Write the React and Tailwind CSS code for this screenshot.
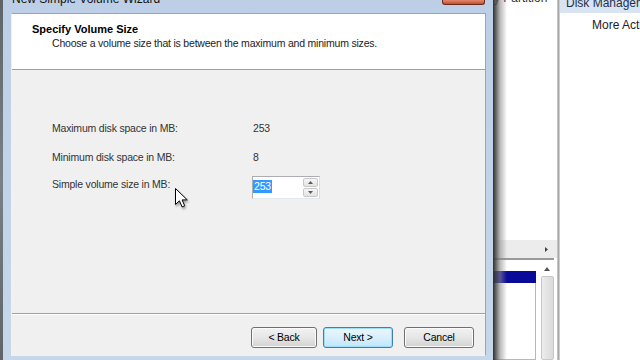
import React from 'react';

const Cursor = () => (
  <svg width="14" height="21" viewBox="0 0 14 21" className="absolute left-[163px] top-[118px] drop-shadow-[1px_2px_1px_rgba(0,0,0,0.35)]">
    <path d="M0.5 0.5 L0.5 16.5 L4.4 12.8 L7.1 18.9 L9.7 17.8 L7.1 11.9 L12.3 11.9 Z" fill="#fff" stroke="#000" strokeWidth="1" strokeLinejoin="round" />
  </svg>
);

const SpinBox = () => (
  <div className="w-[68px] h-[23px] flex border border-[#abadb3] border-b-[#e3e9ef] border-r-[#dbdfe6] bg-white">
    <div className="flex-1 pt-[3px] pl-0">
      <span className="inline-block h-[13px] leading-[13px] px-[1px] bg-[#3399ff] text-white text-[10.5px] tracking-[-0.2px]">253</span>
    </div>
    <div className="w-[15px] my-[1px] mr-[1px] flex flex-col gap-[1px]">
      <div className="flex-1 flex items-center justify-center border border-[#c9c9c9] rounded-[2px] bg-gradient-to-b from-[#f6f6f6] to-[#e4e4e4]">
        <svg width="5" height="3" viewBox="0 0 5 3"><path d="M0 3 L2.5 0 L5 3 Z" fill="#5a5a5a" /></svg>
      </div>
      <div className="flex-1 flex items-center justify-center border border-[#c9c9c9] rounded-[2px] bg-gradient-to-b from-[#f6f6f6] to-[#e4e4e4]">
        <svg width="5" height="3" viewBox="0 0 5 3"><path d="M0 0 L2.5 3 L5 0 Z" fill="#5a5a5a" /></svg>
      </div>
    </div>
  </div>
);

const Button = ({ label, primary, width }) => (
  <div
    className={
      primary
        ? 'h-[21px] flex items-center justify-center rounded-[3px] border border-[#3c7fb1] bg-gradient-to-b from-[#eaf6fd] via-[#d9f0fc] to-[#bee6fd] text-[10.5px] tracking-[-0.2px] text-black shadow-[inset_0_0_0_1px_#9fdcf8]'
        : 'h-[21px] flex items-center justify-center rounded-[3px] border border-[#707070] bg-gradient-to-b from-[#f2f2f2] via-[#e6e6e6] to-[#d2d2d2] text-[10.5px] tracking-[-0.2px] text-black shadow-[inset_0_0_0_1px_#fbfbfb]'
    }
    style={{ width }}
  >
    {label}
  </div>
);

const WizardWindow = () => (
  <div className="w-[490px] shrink-0 flex flex-col bg-gradient-to-b from-[#bccfe6] to-[#c6d7ea]">
    {/* title bar, mostly scrolled off the top */}
    <div className="h-[13px] flex justify-between overflow-hidden">
      <div className="pl-[9px] mt-[-8px] text-[12px] leading-[14px] text-[#111] whitespace-nowrap">New Simple Volume Wizard</div>
      <div className="w-[43px] h-[5px] mr-[8px] rounded-b-[3px] border border-t-0 border-[#6e2a1e] bg-gradient-to-b from-[#e08a6c] to-[#c44c30]" />
    </div>

    <div className="flex-1 ml-[8px] mr-[7px] mb-[4px] flex flex-col border border-[#95a6ba] border-l-[#eef3f9] border-b-[#eef3f9]">
      {/* header */}
      <div className="h-[56px] bg-white border-b border-[#a0a0a0] pt-[9px] pl-[20px]">
        <div className="text-[11px] leading-[13px] font-bold text-black">Specify Volume Size</div>
        <div className="ml-[20px] mt-[1px] text-[10.5px] tracking-[-0.2px] leading-[13px] text-[#222] whitespace-nowrap">
          Choose a volume size that is between the maximum and minimum sizes.
        </div>
      </div>

      {/* body */}
      <div className="flex-1 relative bg-[#f0f0f0] pt-[52px] pl-[40px] text-[10.5px] tracking-[-0.2px] leading-[13px] text-[#333]">
        <div className="flex">
          <div className="w-[201px]">Maximum disk space in MB:</div>
          <div>253</div>
        </div>
        <div className="flex mt-[16px]">
          <div className="w-[201px]">Minimum disk space in MB:</div>
          <div>8</div>
        </div>
        <div className="flex items-start mt-[12px]">
          <div className="w-[200px] mt-[2px]">Simple volume size in MB:</div>
          <SpinBox />
        </div>
        <Cursor />
      </div>

      {/* footer */}
      <div className="h-[42px] bg-[#f0f0f0] border-t border-[#a0a0a0] shadow-[inset_0_1px_0_#ffffff] pt-[13px] pr-[11px] flex justify-end items-start">
        <Button label="< Back" width={66} />
        <div className="ml-[6px]">
          <Button label="Next >" width={70} primary />
        </div>
        <div className="ml-[11px]">
          <Button label="Cancel" width={70} />
        </div>
      </div>
    </div>
  </div>
);

const BehindWindow = () => (
  <div className="w-[64px] shrink-0 relative flex flex-col bg-white overflow-hidden">
    <div className="h-[240px]">
      <div className="mt-[-9px] pl-[1px] text-[12px] leading-[14px] text-[#333] whitespace-nowrap">y Partition</div>
    </div>
    <div className="h-[18px] bg-[#ececec] flex items-center justify-end pr-[9px]">
      <svg width="3" height="5" viewBox="0 0 3 5"><path d="M0 0 L3 2.5 L0 5 Z" fill="#444" /></svg>
    </div>
    <div className="h-[2px] bg-[#9a9a9a] mr-[3px]" />
    <div className="flex-1 flex pt-[11px]">
      <div className="w-[43px] flex flex-col">
        <div className="h-[12px] bg-[#0a0a9a]" />
        <div className="flex-1 border border-t-0 border-[#b8b8b8] bg-white" />
      </div>
      <div className="w-[14px] ml-[4px] flex flex-col items-center">
        <svg width="6" height="4" viewBox="0 0 6 4" className="mt-[-4px]"><path d="M0 4 L3 0 L6 4 Z" fill="#555" /></svg>
        <div className="mt-[5px] w-[13px] flex-1 border border-[#c8c8c8] rounded-[2px] bg-gradient-to-r from-[#ececec] to-[#dadada]" />
      </div>
    </div>
    {/* drop shadow of the wizard window */}
    <div className="absolute left-0 top-0 bottom-0 w-[14px] bg-gradient-to-r from-[#2f2f2f] via-[#8a8a8a]/60 to-transparent" />
  </div>
);

const ActionsPane = () => (
  <div className="flex-1 flex flex-col bg-white overflow-hidden">
    <div className="h-[13px] bg-[#d8e4f2] pl-[6px] overflow-hidden">
      <div className="mt-[-4px] text-[12px] leading-[14px] text-[#1e2f4a] whitespace-nowrap">Disk Management</div>
    </div>
    <div className="mt-[5px] pl-[32px] text-[12px] leading-[14px] text-[#222] whitespace-nowrap">More Actions</div>
  </div>
);

export default function App() {
  return (
    <div className="w-[640px] h-[360px] flex overflow-hidden bg-white font-['Liberation_Sans',Arial,sans-serif]">
      <div className="w-[3px] shrink-0 bg-gradient-to-b from-[#5f6469] via-[#7b8086] to-[#5f6469]" />
      <WizardWindow />
      <BehindWindow />
      <div className="w-[3px] shrink-0 bg-gradient-to-r from-[#d0d0d0] via-[#a8a8a8] to-[#e0e0e0]" />
      <ActionsPane />
    </div>
  );
}
